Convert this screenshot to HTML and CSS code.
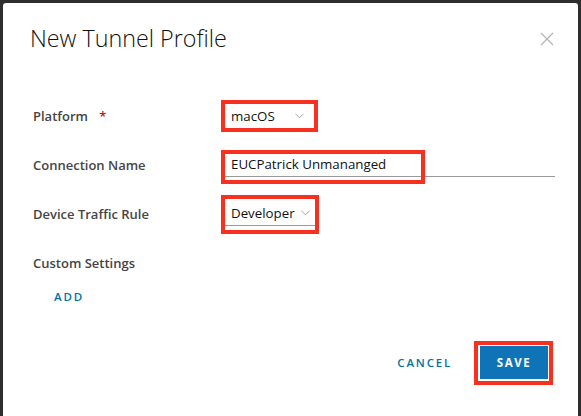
FILE: index.html
```html
<!DOCTYPE html>
<html>
<head>
<meta charset="utf-8">
<link rel="stylesheet" href="styles.css">
</head>
<body>
<div class="modal">
  <div class="header">
    <h1 class="title">New Tunnel Profile</h1>
    <svg class="close" width="14" height="14" viewBox="0 0 14 14"><path d="M1 1L13 13M13 1L1 13" stroke="#b3b3b3" stroke-width="1.2" fill="none"/></svg>
  </div>
  <div class="form">
    <div class="label">Platform <span class="req">*</span></div>
    <div class="cell">
      <div class="select sel-platform">
        <span>macOS</span>
        <svg class="caret" width="9" height="6" viewBox="0 0 9 6"><path d="M0.5 0.8L4.5 4.8L8.5 0.8" stroke="#a6a6a6" stroke-width="1" fill="none"/></svg>
        <span class="mark mark-platform"></span>
      </div>
    </div>
    <div class="label">Connection Name</div>
    <div class="cell">
      <div class="input">
        <span>EUCPatrick Unmananged</span>
        <span class="mark mark-name"></span>
      </div>
    </div>
    <div class="label">Device Traffic Rule</div>
    <div class="cell">
      <div class="select sel-rule">
        <span>Developer</span>
        <svg class="caret" width="9" height="6" viewBox="0 0 9 6"><path d="M0.5 0.8L4.5 4.8L8.5 0.8" stroke="#a6a6a6" stroke-width="1" fill="none"/></svg>
        <span class="mark mark-rule"></span>
      </div>
    </div>
    <div class="label">Custom Settings</div>
    <div class="cell"></div>
  </div>
  <div class="add-row"><span class="link">ADD</span></div>
  <div class="footer">
    <span class="link cancel">CANCEL</span>
    <div class="save-wrap">
      <span class="save">SAVE</span>
      <span class="mark mark-save"></span>
    </div>
  </div>
</div>
</body>
</html>
```
FILE: styles.css
```css
html, body {
  margin: 0;
  padding: 0;
  background: #2e2e2e;
  height: 416px;
  overflow: hidden;
}
body {
  padding: 3px 3px 0 3px;
  font-family: "Open Sans", "Noto Sans", sans-serif;
  color: #000;
}
.modal {
  background: #fff;
  height: 413px;
  border-radius: 3px 3px 0 0;
  position: relative;
}
.header {
  display: flex;
  justify-content: space-between;
  align-items: flex-start;
  padding: 19px 24px 0 27px;
}
.title {
  margin: 0;
  font-size: 23.3px;
  font-weight: 300;
  line-height: 32px;
  color: #111;
}
.close {
  margin-top: 10px;
}
.form {
  display: grid;
  grid-template-columns: 188px 1fr;
  grid-auto-rows: 49px;
  margin-top: 37px;
  padding-left: 30px;
  padding-right: 23px;
  align-items: center;
}
.label {
  font-size: 13px;
  font-weight: 600;
  color: #454545;
}
.req {
  color: #b0241a;
  margin-left: 8px;
}
.cell {
  display: flex;
  align-items: center;
  padding-left: 4px;
}
.select, .input {
  position: relative;
  display: flex;
  align-items: center;
  height: 24px;
  box-sizing: border-box;
  padding-left: 6px;
  font-size: 13.3px;
  color: #111;
}
.sel-platform {
  width: 89px;
}
.sel-rule {
  width: 90px;
  border-bottom: 1px solid #9a9a9a;
}
.input {
  width: 100%;
  border-bottom: 1px solid #9a9a9a;
}
.caret {
  margin-left: auto;
  margin-right: 10px;
}
.sel-rule .caret {
  margin-right: 5px;
}
.mark {
  position: absolute;
  border: 4px solid #f7301f;
  box-sizing: border-box;
  pointer-events: none;
}
.mark-platform { left: -4px; top: -4px; width: 97px; height: 32px; }
.mark-name { left: -4px; top: -3px; width: 204px; height: 34px; }
.mark-rule { left: -4px; top: -7px; width: 98px; height: 39px; }
.link {
  color: #0072a3;
  font-size: 11.5px;
  font-weight: 600;
  letter-spacing: 1.8px;
}
.add-row {
  padding-left: 51px;
  margin-top: -3px;
}
.footer {
  display: flex;
  justify-content: flex-end;
  align-items: center;
  gap: 28px;
  padding-right: 30px;
  margin-top: 40px;
}
.save-wrap {
  position: relative;
}
.save {
  display: flex;
  align-items: center;
  justify-content: center;
  width: 68px;
  height: 33px;
  background: #0e73b7;
  color: #fff;
  font-size: 11.5px;
  font-weight: 700;
  letter-spacing: 1.6px;
}
.mark-save { left: -6px; top: -5px; width: 79px; height: 44px; }
```
